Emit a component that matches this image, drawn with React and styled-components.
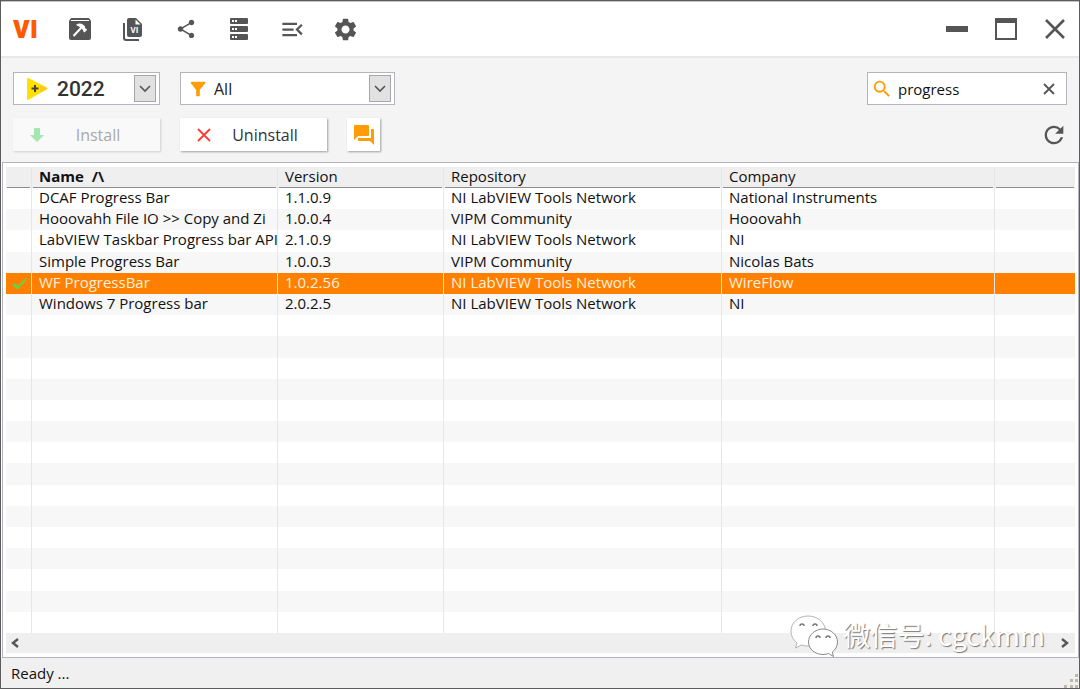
import React, { useState } from "react";
import styled, { createGlobalStyle, css } from "styled-components";
import {
  MdFilterAlt,
  MdForum,
  MdMenuOpen,
  MdRefresh,
  MdSearch,
  MdSettings,
  MdShare,
} from "react-icons/md";

const colors = {
  ink: "#555555",
  orange: "#ff8000",
  amber: "#ff9c07",
  logo: "#ff5a00",
  panel: "#f4f4f4",
  line: "#b4b4bc",
};

const columns = ["Name", "Version", "Repository", "Company"];

const packages = [
  ["DCAF Progress Bar", "1.1.0.9", "NI LabVIEW Tools Network", "National Instruments"],
  ["Hooovahh File IO >> Copy and Zi", "1.0.0.4", "VIPM Community", "Hooovahh"],
  ["LabVIEW Taskbar Progress bar API", "2.1.0.9", "NI LabVIEW Tools Network", "NI"],
  ["Simple Progress Bar", "1.0.0.3", "VIPM Community", "Nicolas Bats"],
  ["WF ProgressBar", "1.0.2.56", "NI LabVIEW Tools Network", "WireFlow"],
  ["Windows 7 Progress bar", "2.0.2.5", "NI LabVIEW Tools Network", "NI"],
];

const emptyRows = Array.from({ length: 15 });

export default function App() {
  const [query, setQuery] = useState("progress");
  const [selected, setSelected] = useState(4);

  return (
    <>
      <GlobalStyle />
      <Window>
        {/* Title bar */}
        <TitleBar>
          <Logo>VI</Logo>
          <Tools>
            <IconButton aria-label="Build package">
              <HammerIcon />
            </IconButton>
            <IconButton aria-label="VI packages">
              <DocumentIcon />
            </IconButton>
            <IconButton aria-label="Share">
              <MdShare size={22} />
            </IconButton>
            <IconButton aria-label="Repositories">
              <ServerIcon />
            </IconButton>
            <IconButton aria-label="Package list">
              <MdMenuOpen size={27} />
            </IconButton>
            <IconButton aria-label="Settings">
              <MdSettings size={27} />
            </IconButton>
          </Tools>
          <WindowControls>
            <IconButton aria-label="Minimize">
              <svg width="22" height="22" viewBox="0 0 22 22">
                <path d="M0 8h22v6H0z" fill="currentColor" />
              </svg>
            </IconButton>
            <IconButton aria-label="Maximize">
              <svg width="22" height="22" viewBox="0 0 22 22">
                <path d="M0 0h22v22H0zM2 5v15h18V5z" fill="currentColor" fillRule="evenodd" />
              </svg>
            </IconButton>
            <IconButton aria-label="Close">
              <svg width="20" height="20" viewBox="0 0 20 20">
                <path d="M1 1l18 18M19 1L1 19" stroke="currentColor" strokeWidth="2.6" />
              </svg>
            </IconButton>
          </WindowControls>
        </TitleBar>

        {/* Toolbar */}
        <Toolbar>
          <ToolbarRow>
            <VersionPicker>
              <LabviewIcon />
              <Select aria-label="LabVIEW version" $large>
                <option>2022</option>
              </Select>
              <Arrow />
            </VersionPicker>
            <FilterPicker>
              <MdFilterAlt size={22} color={colors.amber} />
              <Select aria-label="Category">
                <option>All</option>
              </Select>
              <Arrow />
            </FilterPicker>
            <SearchBox>
              <MdSearch size={22} color={colors.amber} />
              <SearchInput
                aria-label="Search packages"
                value={query}
                onChange={(e) => setQuery(e.target.value)}
              />
              <ClearButton aria-label="Clear search" onClick={() => setQuery("")}>
                <svg width="12" height="12" viewBox="0 0 12 12">
                  <path d="M1 1l10 10M11 1L1 11" stroke="currentColor" strokeWidth="1.8" />
                </svg>
              </ClearButton>
            </SearchBox>
          </ToolbarRow>
          <ToolbarRow>
            <ActionButton disabled>
              <svg width="14" height="14" viewBox="0 0 14 14">
                <path d="M4 0h6v7h4l-7 7-7-7h4z" fill="#a5e6b2" />
              </svg>
              <span>Install</span>
            </ActionButton>
            <ActionButton>
              <svg width="14" height="14" viewBox="0 0 14 14">
                <path d="M1 1l12 12M13 1L1 13" stroke="#ff3b30" strokeWidth="1.8" />
              </svg>
              <span>Uninstall</span>
            </ActionButton>
            <CommentsButton aria-label="Comments">
              <MdForum size={24} />
            </CommentsButton>
            <RefreshButton aria-label="Refresh">
              <MdRefresh size={28} />
            </RefreshButton>
          </ToolbarRow>
        </Toolbar>

        {/* Package list */}
        <ListPanel>
          <TableArea>
            <Table>
              <colgroup>
                <Col $width={26} />
                <Col $width={246} />
                <Col $width={166} />
                <Col $width={278} />
                <Col $width={273} />
                <col />
              </colgroup>
              <thead>
                <tr>
                  <HeadCell aria-label="Installed" />
                  {columns.map((name, i) => (
                    <HeadCell key={name} $sorted={i === 0}>
                      {name}
                      {i === 0 && <SortMark>/\</SortMark>}
                    </HeadCell>
                  ))}
                  <HeadCell aria-label="More" />
                </tr>
              </thead>
              <tbody>
                {packages.map((cells, i) => (
                  <Row key={cells[0]} $selected={i === selected} onClick={() => setSelected(i)}>
                    <MarkCell>{i === 4 && <CheckIcon />}</MarkCell>
                    {cells.map((text, j) => (
                      <Cell key={j}>{text}</Cell>
                    ))}
                    <Cell />
                  </Row>
                ))}
                {emptyRows.map((_, i) => (
                  <Row key={i}>
                    <MarkCell />
                    <Cell />
                    <Cell />
                    <Cell />
                    <Cell />
                    <Cell />
                  </Row>
                ))}
              </tbody>
            </Table>
          </TableArea>
          <ScrollBar>
            <ScrollButton aria-label="Scroll left">
              <svg width="8" height="10" viewBox="0 0 8 10">
                <path d="M7 1L2 5l5 4" fill="none" stroke="currentColor" strokeWidth="2.4" />
              </svg>
            </ScrollButton>
            <ScrollButton aria-label="Scroll right">
              <svg width="8" height="10" viewBox="0 0 8 10">
                <path d="M1 1l5 4-5 4" fill="none" stroke="currentColor" strokeWidth="2.4" />
              </svg>
            </ScrollButton>
          </ScrollBar>
          <Watermark>
            <WechatIcon />
            <span>微信号: cgckmm</span>
          </Watermark>
        </ListPanel>

        <StatusBar>
          <span>Ready ...</span>
          <GripIcon />
        </StatusBar>
      </Window>
    </>
  );
}

// - drawings
const HammerIcon = () => (
  <svg width="22" height="22" viewBox="0 0 22 22">
    <path d="M2 0h18l2 3v17a2 2 0 0 1-2 2H2a2 2 0 0 1-2-2V3z" fill="currentColor" />
    <path d="M2 2.500h18" stroke="#fff" strokeWidth="1" />
    <path d="M4.500 18l7.500-8" stroke="#fff" strokeWidth="2" />
    <path d="M7 7c2-2 5-2 7-.5l2 2v1.500l1.500 1 .5 1-2.500 2.500-1.200-1-.3-1.500-4-3.500z" fill="#fff" />
  </svg>
);

const DocumentIcon = () => (
  <svg width="20" height="23" viewBox="0 0 20 23">
    <path d="M1 5v15a2 2 0 0 0 2 2h13" fill="none" stroke="currentColor" strokeWidth="2" />
    <path d="M6 0h7l6 6v11a2 2 0 0 1-2 2H6a2 2 0 0 1-2-2V2a2 2 0 0 1 2-2z" fill="currentColor" />
    <path d="M12.500 1.500v5h5z" fill="#fff" />
    <text x="11.500" y="15" textAnchor="middle" fontFamily="Open Sans" fontSize="8" fontWeight="700" fill="#fff">
      VI
    </text>
  </svg>
);

const ServerIcon = () => (
  <svg width="18" height="22" viewBox="0 0 18 22">
    {[0, 8, 16].map((y) => (
      <g key={y}>
        <rect y={y} width="18" height="6" rx="1" fill="currentColor" />
        <path d={`M2 ${y + 3}h2M5 ${y + 3}h2`} stroke="#fff" strokeWidth="2" />
      </g>
    ))}
  </svg>
);

const LabviewIcon = () => (
  <svg width="22" height="22" viewBox="0 0 22 22">
    <path d="M2 1l18.500 9.500L2 21z" fill="#ffe000" stroke="#ffe000" strokeWidth="2" strokeLinejoin="round" />
    <path d="M14 7l7 3.500-7 4z" fill="#ffc61a" />
    <path d="M9 7v7M5.500 10.500h7" stroke="#444" strokeWidth="2" />
  </svg>
);

const CheckIcon = () => (
  <svg width="16" height="13" viewBox="0 0 16 13">
    <path d="M0 8l3-2 3 3 8-8 1 1.500L5.500 12.500z" fill="#5fd54a" />
  </svg>
);

const WechatIcon = () => (
  <svg width="50" height="44" viewBox="0 0 50 44">
    <g fill="#fff" stroke="#8a8a8a" strokeWidth="1">
      <path
        d="M18 1C8 1 1 8 1 16c0 5 2.500 9 6 12l-1.500 5 6-3c2 .8 4.500 1 7 1 10 0 17-7 17-15S28 1 18 1z"
        stroke="#b5b5b5"
      />
      <path d="M33 14c-8 0-14.500 6-14.500 13S25 39.500 33 39.500c2 0 4-.4 5.500-1l5 3-1.200-4.500c3.200-2.400 5.200-6 5.200-10C47.500 20 41 14 33 14z" />
    </g>
    <g fill="none" stroke="#777" strokeWidth="1.500">
      <path d="M10 11a2 2 0 0 1 4 0M23 11a2 2 0 0 1 4 0M26 23a2 2 0 0 1 4 0M36 23a2 2 0 0 1 4 0" />
    </g>
  </svg>
);

const GripIcon = () => (
  <svg width="14" height="14" viewBox="0 0 14 14">
    <path
      d="M11 0h3v3h-3zM6 5h3v3H6zM11 5h3v3h-3zM0 11h3v3H0zM6 11h3v3H6zM11 11h3v3h-3z"
      fill="#bdb9a8"
    />
  </svg>
);

const Arrow = () => (
  <ArrowBox>
    <svg width="12" height="8" viewBox="0 0 12 8">
      <path d="M1 1l5 5 5-5" fill="none" stroke={colors.ink} strokeWidth="1.6" />
    </svg>
  </ArrowBox>
);

// - page
const GlobalStyle = createGlobalStyle`
  * {
    box-sizing: border-box;
  }
  body {
    margin: 0;
    background: #5c5c5e;
    color: #111;
    font: 15px/20px "Open Sans", "Noto Sans CJK SC", sans-serif;
  }
  button, input, select {
    font: inherit;
    color: inherit;
    border: none;
    padding: 0;
    margin: 0;
    background: none;
    outline: none;
  }
  svg {
    display: block;
    flex: none;
  }
`;

const Window = styled.div`
  display: flex;
  flex-direction: column;
  height: 100vh;
  border: 1px solid #5c5c5e;
  background: white;
`;

// - title bar
const TitleBar = styled.header`
  display: flex;
  align-items: center;
  height: 57px;
  padding: 0 11px 0 12px;
  border-top: 1px solid #c4c4c4;
  border-bottom: 2px solid #e8e8e8;
  color: ${colors.ink};
`;

const Logo = styled.div`
  width: 54px;
  color: ${colors.logo};
  font-size: 24px;
  font-weight: 800;
`;

const Tools = styled.nav`
  display: flex;
  gap: 27px;
`;

const WindowControls = styled.div`
  display: flex;
  gap: 23px;
  margin-left: auto;
`;

const IconButton = styled.button`
  display: flex;
  align-items: center;
  justify-content: center;
  width: 26px;
  height: 28px;
`;

// - toolbar
const Toolbar = styled.div`
  display: flex;
  flex-direction: column;
  gap: 13px;
  padding: 14px 12px 11px;
  background: ${colors.panel};
`;

const ToolbarRow = styled.div`
  display: flex;
  align-items: center;
  gap: 20px;
`;

const field = css`
  display: flex;
  align-items: center;
  height: 33px;
  border: 1px solid ${colors.line};
  background: white;
`;

const Picker = styled.label`
  ${field}
  display: grid;
  grid-template-rows: 1fr;

  > * {
    grid-row: 1;
  }
`;

const VersionPicker = styled(Picker)`
  width: 147px;
  grid-template-columns: 12px 31px 1fr 25px;

  > svg {
    grid-column: 2;
  }
  > select {
    grid-column: 3 / 5;
  }
`;

const FilterPicker = styled(Picker)`
  width: 215px;
  grid-template-columns: 6px 27px 1fr 25px;

  > svg {
    grid-column: 2;
  }
  > select {
    grid-column: 3 / 5;
  }
`;

const Select = styled.select`
  appearance: none;
  width: 100%;
  height: 100%;
  color: #222;
  font-size: 16px;

  ${({ $large }) =>
    $large &&
    css`
      color: #333;
      font-family: Roboto, sans-serif;
      font-size: 21px;
      font-weight: 500;
    `}
`;

const ArrowBox = styled.span`
  display: flex;
  align-items: center;
  justify-content: center;
  grid-column: 4;
  width: 22px;
  height: 27px;
  border: 1px solid #a6a6a6;
  background: #e1e1e1;
  pointer-events: none;
`;

const SearchBox = styled.div`
  ${field}
  width: 200px;
  margin-left: auto;
  padding: 0 11px 0 3px;
`;

const SearchInput = styled.input`
  flex: 1;
  min-width: 0;
  margin-left: 5px;
`;

const ClearButton = styled.button`
  color: ${colors.ink};
`;

const raised = css`
  height: 33px;
  background: white;
  box-shadow: 1px 1px 2px rgba(0, 0, 0, 0.35);
`;

const ActionButton = styled.button`
  ${raised}
  display: flex;
  align-items: center;
  width: 147px;
  padding-left: 17px;
  color: #333;
  font-size: 16px;

  span {
    flex: 1;
    padding-right: 8px;
    text-align: center;
  }

  &:disabled {
    background: #f9f9f9;
    color: #a8a8a8;
    box-shadow: 1px 1px 2px rgba(0, 0, 0, 0.15);
  }
`;

const CommentsButton = styled.button`
  ${raised}
  display: flex;
  align-items: center;
  justify-content: center;
  width: 33px;
  color: ${colors.amber};
`;

const RefreshButton = styled(IconButton)`
  margin-left: auto;
  color: ${colors.ink};
`;

// - list
const ListPanel = styled.main`
  position: relative;
  display: flex;
  flex-direction: column;
  flex: 1;
  min-height: 0;
  margin: 0 0 0 1px;
  padding: 4px 3px;
  border: 1px solid ${colors.line};
`;

const TableArea = styled.div`
  flex: 1;
  min-height: 0;
`;

const Table = styled.table`
  width: 100%;
  height: 100%;
  table-layout: fixed;
  border-collapse: separate;
  border-spacing: 0;
`;

const Col = styled.col`
  width: ${({ $width }) => $width}px;
`;

const cell = css`
  height: 21px;
  padding: 0 0 0 7px;
  overflow: hidden;
  line-height: 18px;
  white-space: nowrap;
  text-align: left;
  vertical-align: top;
  border-right: 1px solid #e6e6e6;

  &:last-child {
    border-right: none;
  }
`;

const HeadCell = styled.th`
  ${cell}
  font-weight: ${({ $sorted }) => ($sorted ? 700 : 400)};
  background: linear-gradient(#8c8c8c, #8c8c8c) 1px 100% / calc(100% - 2px) 1px no-repeat, #efefef;
`;

const SortMark = styled.span`
  margin-left: 8px;
`;

const Cell = styled.td`
  ${cell}
`;

const MarkCell = styled(Cell)`
  padding-left: 6px;
  vertical-align: middle;
`;

const Row = styled.tr`
  &:nth-child(even) {
    background: #f7f7f7;
  }

  ${({ $selected }) =>
    $selected &&
    css`
      &&& {
        background: ${colors.orange};
        color: #fff0dc;
      }
    `}
`;

const ScrollBar = styled.div`
  display: flex;
  align-items: center;
  justify-content: space-between;
  height: 20px;
  padding: 0 6px 0 5px;
  background: #efefef;
`;

const ScrollButton = styled.button`
  color: ${colors.ink};
`;

// - lies over the lower right of the list
const Watermark = styled.div`
  position: absolute;
  right: 33px;
  bottom: -2px;
  display: flex;
  align-items: center;
  gap: 3px;
  color: white;
  font-family: "Noto Sans CJK SC", sans-serif;
  font-size: 27px;
  line-height: 40px;
  text-shadow: 1px 1px 1px #777;
  pointer-events: none;

  span {
    padding-bottom: 4px;
  }
`;

// - status bar
const StatusBar = styled.footer`
  display: flex;
  align-items: center;
  justify-content: space-between;
  height: 30px;
  padding: 0 1px 0 10px;
  background: #f0f0f0;

  svg {
    align-self: flex-end;
  }
`;
